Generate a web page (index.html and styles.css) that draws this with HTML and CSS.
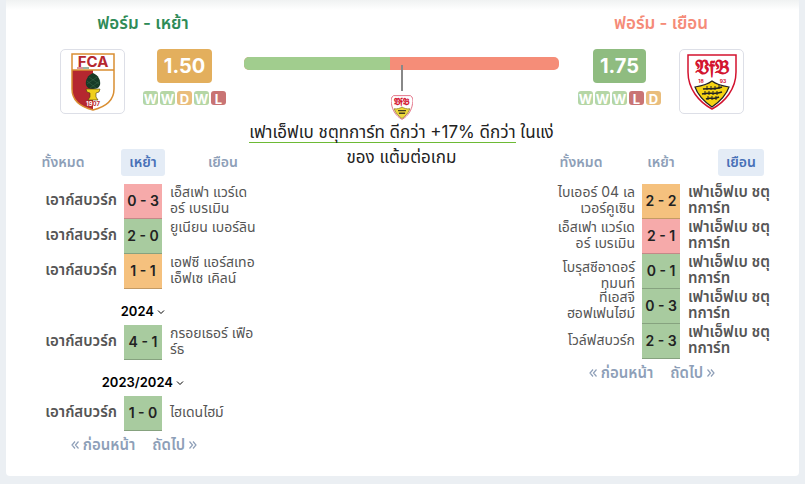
FILE: index.html
```
<!DOCTYPE html>
<html lang="th">
<head>
    <meta charset="UTF-8">
    <meta name="viewport" content="width=device-width, initial-scale=1.0">
    <title>ฟอร์ม</title>
    <link rel="stylesheet" href="styles.css">
</head>
<body>
    <!-- Shared icons -->
    <svg class="defs" width="0" height="0" aria-hidden="true">
        <symbol id="down" viewBox="0 0 8 8">
            <path d="M1 2.500L4 5.500L7 2.500" fill="none" stroke="currentColor"/>
        </symbol>
        <symbol id="prev" viewBox="0 0 8 10">
            <path d="M4 1.500L1 5L4 8.500M7.500 1.500L4.500 5L7.500 8.500" fill="none" stroke="currentColor" stroke-width="1.200"/>
        </symbol>
        <symbol id="next" viewBox="0 0 8 10">
            <path d="M0.500 1.500L3.500 5L0.500 8.500M4 1.500L7 5L4 8.500" fill="none" stroke="currentColor" stroke-width="1.200"/>
        </symbol>
    </svg>

    <main class="card">
        <!-- Home -->
        <section class="side">
            <h2 class="title title-home">ฟอร์ม - เหย้า</h2>
            <div class="team">
                <div class="crest">
                    <svg width="44" height="58" viewBox="0 0 44 58" role="img" aria-label="FCA">
                        <path d="M1 1H43V36C43 48 34 54 22 57C10 54 1 48 1 36Z" fill="#fff"/>
                        <path d="M1 17H22V57C10 54 1 48 1 36Z" fill="#b5272f"/>
                        <path d="M1 17H43M1 1H43V36C43 48 34 54 22 57C10 54 1 48 1 36Z" fill="none" stroke="#d98e32" stroke-width="1.500"/>
                        <text x="22" y="14" class="fca-name">FCA</text>
                        <path d="M6 15H12" stroke="#b5272f" stroke-width="1"/>
                        <path d="M12 15H18" stroke="#2b6b45" stroke-width="1"/>
                        <path d="M22 20C27 22 30 27 29 32C28 35 25 36 22 36C19 36 16 35 15 32C14 27 17 22 22 20Z" fill="#173b27"/>
                        <path d="M18 24L28 31M16 28L25 35M26 24L16 31M29 28L19 35" stroke="#3d6a4c" stroke-width="0.500"/>
                        <path d="M15 36H29L28 39L25 40V44L27 47H17L19 44V40L16 39Z" fill="#f0cf1d" stroke="#4a3a10" stroke-width="0.600"/>
                        <text x="22" y="53" class="fca-year"><tspan fill="#fff">19</tspan><tspan fill="#b5272f">07</tspan></text>
                    </svg>
                </div>
                <div class="rating">
                    <strong class="odds odds-mid">1.50</strong>
                    <div class="form">
                        <span class="w">W</span><span class="w">W</span><span class="d">D</span><span class="w">W</span><span class="l">L</span>
                    </div>
                </div>
            </div>

            <div class="tabs">
                <button type="button">ทั้งหมด</button>
                <button type="button" class="active">เหย้า</button>
                <button type="button">เยือน</button>
            </div>

            <table class="matches">
                <tr>
                    <td class="own"><div>เอาก์สบวร์ก</div></td>
                    <td class="score lost">0 - 3</td>
                    <td><div>เอ็สเฟา แวร์เด<br>อร์ เบรเมิน</div></td>
                </tr>
                <tr>
                    <td class="own"><div>เอาก์สบวร์ก</div></td>
                    <td class="score won">2 - 0</td>
                    <td><div class="high">ยูเนียน เบอร์ลิน</div></td>
                </tr>
                <tr>
                    <td class="own"><div>เอาก์สบวร์ก</div></td>
                    <td class="score drawn">1 - 1</td>
                    <td><div>เอฟซี แอร์สเทอ<br>เอ็ฟเซ เคิลน์</div></td>
                </tr>
                <tr>
                    <th colspan="3"><button type="button" class="season">2024 <svg width="8" height="8"><use href="#down"/></svg></button></th>
                </tr>
                <tr>
                    <td class="own"><div>เอาก์สบวร์ก</div></td>
                    <td class="score won">4 - 1</td>
                    <td><div>กรอยเธอร์ เฟือ<br>ร์ธ</div></td>
                </tr>
                <tr>
                    <th colspan="3"><button type="button" class="season">2023/2024 <svg width="8" height="8"><use href="#down"/></svg></button></th>
                </tr>
                <tr>
                    <td class="own"><div>เอาก์สบวร์ก</div></td>
                    <td class="score won">1 - 0</td>
                    <td><div>ไฮเดนไฮม์</div></td>
                </tr>
            </table>

            <nav class="pager">
                <a href="#"><svg width="8" height="10"><use href="#prev"/></svg> ก่อนหน้า</a>
                <a href="#">ถัดไป <svg width="8" height="10"><use href="#next"/></svg></a>
            </nav>
        </section>

        <!-- Comparison -->
        <section class="compare">
            <div class="bar"><span style="width: 46.500%"></span></div>
            <div class="pin"></div>
            <svg class="mini" width="22" height="25" viewBox="0 0 50 56" role="img" aria-label="VfB">
                <path d="M6 1H44C50 4 51 12 49 19C47 35 38 48 25 55C12 48 3 35 1 19C-1 12 0 4 6 1Z" fill="#fff" stroke="#e0637a" stroke-width="2"/>
                <path d="M7 31C14 32 20 30 25 27C30 30 36 32 43 31C39 42 32 48 25 53C18 48 11 42 7 31Z" fill="#f0d83a" stroke="#998a35" stroke-width="2"/>
                <path d="M16 35H34M18 41H32" stroke="#443f20" stroke-width="3"/>
                <text x="25" y="23" class="vfb-name">𝔙𝔣𝔅</text>
            </svg>
            <p><span class="better">เฟาเอ็ฟเบ ชตุทการ์ท ดีกว่า +17% ดีกว่า</span> ในแง่<br>ของ แต้มต่อเกม</p>
        </section>

        <!-- Away -->
        <section class="side">
            <h2 class="title title-away">ฟอร์ม - เยือน</h2>
            <div class="team">
                <div class="rating">
                    <strong class="odds odds-good">1.75</strong>
                    <div class="form">
                        <span class="w">W</span><span class="w">W</span><span class="w">W</span><span class="l">L</span><span class="d">D</span>
                    </div>
                </div>
                <div class="crest">
                    <svg width="50" height="56" viewBox="0 0 50 56" role="img" aria-label="VfB">
                        <path d="M1 1H49V18C49 35 38 48 25 55C12 48 1 35 1 18Z" fill="#fff" stroke="#d3122e" stroke-width="1.500"/>
                        <path d="M8 33C14 32 20 31 25 27C30 31 36 32 42 33C39 42 32 48 25 53C18 48 11 42 8 33Z" fill="#f5d313" stroke="#222" stroke-width="1.200"/>
                        <path d="M16 35C22 34 28 36 35 33M15 40C22 38 28 41 35 38M19 45C23 43 27 46 32 43" fill="none" stroke="#222" stroke-width="1.500"/>
                        <path d="M20 32V36M24 32V36M28 32V36M32 31V35M18 37V41M22 37V41M26 37V41M30 37V41M21 42V46M25 42V46M29 42V46" stroke="#222" stroke-width="1"/>
                        <text x="25" y="20" class="vfb-name">𝔙𝔣𝔅</text>
                        <text x="14" y="29" class="vfb-year">18</text>
                        <text x="36" y="29" class="vfb-year">93</text>
                    </svg>
                </div>
            </div>

            <div class="tabs">
                <button type="button">ทั้งหมด</button>
                <button type="button">เหย้า</button>
                <button type="button" class="active">เยือน</button>
            </div>

            <table class="matches">
                <tr>
                    <td><div>ไบเออร์ 04 เล<br>เวอร์คูเซิน</div></td>
                    <td class="score drawn">2 - 2</td>
                    <td class="own"><div>เฟาเอ็ฟเบ ชตุ<br>ทการ์ท</div></td>
                </tr>
                <tr>
                    <td><div>เอ็สเฟา แวร์เด<br>อร์ เบรเมิน</div></td>
                    <td class="score lost">2 - 1</td>
                    <td class="own"><div>เฟาเอ็ฟเบ ชตุ<br>ทการ์ท</div></td>
                </tr>
                <tr>
                    <td><div class="low">โบรุสซีอาดอร์<br>ทมนท์</div></td>
                    <td class="score won">0 - 1</td>
                    <td class="own"><div>เฟาเอ็ฟเบ ชตุ<br>ทการ์ท</div></td>
                </tr>
                <tr>
                    <td><div>ที่เอสจี<br>ฮอฟเฟนไฮม์</div></td>
                    <td class="score won">0 - 3</td>
                    <td class="own"><div>เฟาเอ็ฟเบ ชตุ<br>ทการ์ท</div></td>
                </tr>
                <tr>
                    <td><div>โวล์ฟสบวร์ก</div></td>
                    <td class="score won">2 - 3</td>
                    <td class="own"><div>เฟาเอ็ฟเบ ชตุ<br>ทการ์ท</div></td>
                </tr>
            </table>

            <nav class="pager">
                <a href="#"><svg width="8" height="10"><use href="#prev"/></svg> ก่อนหน้า</a>
                <a href="#">ถัดไป <svg width="8" height="10"><use href="#next"/></svg></a>
            </nav>
        </section>
    </main>
</body>
</html>
```
FILE: styles.css
```
* { box-sizing: border-box; }
body {
    margin: 0;
    padding: 0 6px 8px;
    background: #ebeff3;
    color: #222;
    font-family: Inter, Tahoma, "Noto Sans Thai", "Noto Sans", sans-serif;
    font-size: 14px;
}
.defs { position: absolute; }
.card {
    display: grid;
    grid-template-columns: 240px 1fr 240px;
    padding: 10px 18px 18px 17px;
    background: linear-gradient(#f0f2f2, #fff 10px);
    border-radius: 0 0 4px 4px;
}
button {
    border: 0;
    background: none;
    font: inherit;
    cursor: pointer;
}
.title {
    margin: 0 0 13px;
    font-size: 17px;
    font-weight: 600;
    line-height: 26px;
    text-align: center;
}
.title-home { color: #2e8b57; }
.title-away { color: #f58b78; }

.team {
    display: flex;
    justify-content: center;
    gap: 18px;
}
.crest {
    display: flex;
    align-items: center;
    justify-content: center;
    width: 65px;
    height: 65px;
    border: 1px solid #dddfe7;
    border-radius: 5px;
}
.rating {
    display: flex;
    flex-direction: column;
    align-items: center;
    gap: 8px;
}
.odds {
    padding: 0 7px;
    border-radius: 4px;
    color: #fff;
    font-size: 20px;
    line-height: 34px;
}
.odds-mid { background: #e3af5d; }
.odds-good { background: #8fbc80; }
.form {
    display: flex;
    gap: 2px;
}
.form span {
    width: 15px;
    height: 14px;
    border-radius: 3px;
    color: #fff;
    font-size: 13px;
    font-weight: 700;
    line-height: 16px;
    text-align: center;
}
.w { background: #b5d6a5; }
.d { background: #e9bd7d; }
.l { background: #c97474; }

.tabs {
    display: grid;
    grid-template-columns: repeat(3, 1fr);
    justify-items: center;
    margin: 35px 0 8px;
}
.tabs button {
    height: 27px;
    padding: 0 8px;
    border-radius: 3px;
    color: #8e9fb8;
    font-weight: 600;
}
.tabs .active {
    background: #e4ecf6;
    color: #4871b7;
}

.matches {
    width: 100%;
    table-layout: fixed;
    border-spacing: 0;
}
.matches td {
    height: 35px;
    padding: 0 8px 3px;
    color: #555;
    line-height: 16px;
    white-space: nowrap;
}
.matches td:first-child {
    width: 101px;
    padding-right: 7px;
    text-align: right;
}
.matches .own {
    font-size: 15px;
    font-weight: 600;
}
.matches .score {
    width: 38px;
    padding: 0;
    border-bottom: 1px solid rgba(0,0,0,0.2);
    color: #222;
    font-weight: 600;
    text-align: center;
}
.lost { background: #f6aaaa; }
.won { background: #a8cb9f; }
.drawn { background: #f5c17e; }
.high { padding-bottom: 16px; }
.low {
    height: 35px;
    margin-bottom: -3px;
    padding-top: 5px;
}
.matches th {
    height: 36px;
    padding: 7px 0 0;
}
.season {
    padding: 0;
    font-size: 13px;
    font-weight: 600;
}

.pager {
    display: flex;
    justify-content: center;
    gap: 17px;
    padding-right: 18px;
    line-height: 27px;
}
.pager a {
    color: #8e9fb8;
    font-size: 15px;
    font-weight: 600;
    text-decoration: none;
}

.compare {
    margin: 47px -18px 0 -19px;
}
.bar {
    height: 13px;
    border-radius: 5px;
    overflow: hidden;
    background: #f58d78;
}
.bar span {
    display: block;
    height: 100%;
    background: #a1cd8e;
}
.pin {
    width: 2px;
    height: 26px;
    margin: -5px auto 4px;
    background: #888;
}
.mini {
    display: block;
    margin: 0 auto;
}
.compare p {
    margin: 0;
    font-size: 17px;
    line-height: 25px;
    text-align: center;
    white-space: nowrap;
}
.better { border-bottom: 1px solid #6dba35; }

.vfb-name {
    fill: #d3122e;
    stroke: #d3122e;
    stroke-width: 1px;
    font-size: 20px;
    text-anchor: middle;
}
.vfb-year {
    fill: #d3122e;
    font-size: 5px;
    font-weight: 700;
    text-anchor: middle;
}
.fca-name {
    fill: #b5272f;
    font-size: 15px;
    font-weight: 700;
    text-anchor: middle;
}
.fca-year {
    font-size: 6px;
    font-weight: 700;
    text-anchor: middle;
}
```
